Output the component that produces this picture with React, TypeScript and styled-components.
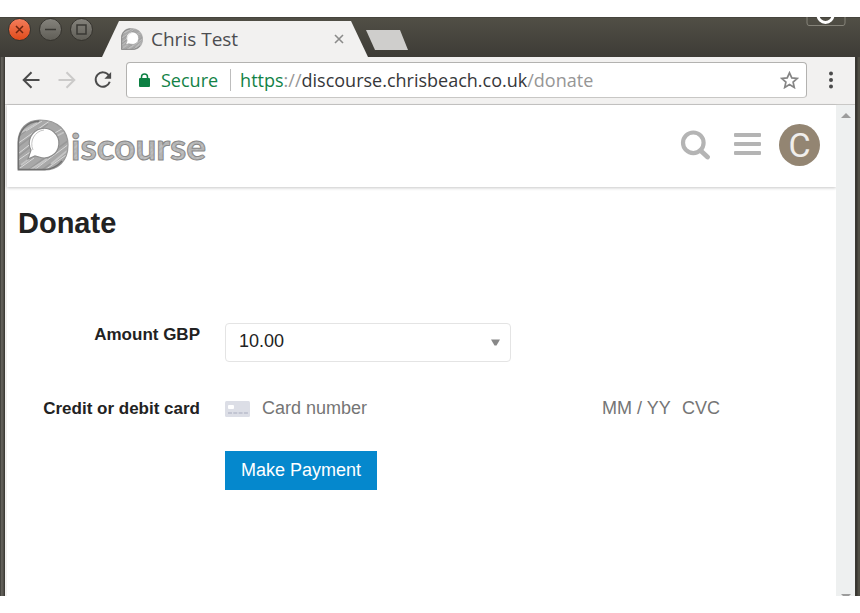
import React from "react";
import styled, { createGlobalStyle } from "styled-components";

const GlobalStyle = createGlobalStyle`
  * { box-sizing: border-box; }
  html { background: #fff; }
  body { margin: 0; }
  button, input, select { font: inherit; color: inherit; margin: 0; }
  button { cursor: pointer; }
`;

const uiFont = `"Open Sans", "Noto Sans", sans-serif`;
const pageFont = `"Liberation Sans", Arial, sans-serif`;

const Desktop = styled.div`
  display: flex;
  min-height: 100vh;
  padding: 17px 0;
`;

const BrowserWindow = styled.div`
  display: flex;
  flex-direction: column;
  flex: 1;
  min-width: 0;
  overflow: hidden;
  background: linear-gradient(90deg, #45443f 0, #45443f 1px, #64625c 1px, #5b5953 3px, #45433e 4px, #36342f 5px, #3b3933 calc(100% - 5px), #36342f calc(100% - 3px), #504e45 calc(100% - 2px));
`;

const TitleBar = styled.div`
  position: relative;
  display: flex;
  align-items: flex-end;
  height: 40px;
  padding-left: 8px;
  background: linear-gradient(#514f46, #3d3b36);
  box-shadow: inset 0 1px #46443d;
`;

const WindowControls = styled.div`
  display: flex;
  align-self: flex-start;
  gap: 8px;
  width: 94px;
  padding-top: 1px;
`;

const WindowButton = styled.button<{ $close?: boolean }>`
  display: grid;
  place-items: center;
  width: 23px;
  height: 23px;
  padding: 0;
  border: 1px solid #35332e;
  border-radius: 50%;
  color: ${(p) => (p.$close ? "#6b2410" : "#3a3934")};
  background: ${(p) => (p.$close ? "linear-gradient(#f47d5b, #df4b1b)" : "linear-gradient(#85837c, #605e57)")};
`;

const Tab = styled.div`
  display: flex;
  align-items: center;
  width: 266px;
  height: 36px;
  padding: 0 19px;
  gap: 8px;
  font: 19px/36px ${uiFont};
  color: #4c4d50;
  background: #f2f1f0;
  clip-path: polygon(0 100%, 17px 0, calc(100% - 17px) 0, 100% 100%);
`;

const TabTitle = styled.span`
  flex: 1;
`;

const PlainButton = styled.button`
  display: grid;
  place-items: center;
  padding: 0;
  border: 0;
  background: none;
`;

const TabClose = styled(PlainButton)`
  width: 20px;
  height: 20px;
  color: #8b8b8a;
`;

const NewTab = styled(PlainButton)`
  width: 42px;
  height: 20px;
  margin: 0 0 7px -2px;
  background: #cfcecc;
  clip-path: polygon(0 0, 34px 0, 100% 100%, 9px 100%);
`;

const Indicator = styled.svg`
  position: absolute;
  top: 0;
  right: 14px;
`;

const Toolbar = styled.div`
  display: flex;
  align-items: center;
  height: 48px;
  margin: 0 5px;
  padding: 0 0 1px 8px;
  border-bottom: 1px solid #c9c8c6;
  background: #f2f1f0;
`;

const ToolButton = styled(PlainButton)<{ $wide?: boolean }>`
  flex: none;
  width: ${(p) => (p.$wide ? "48px" : "36px")};
  height: 36px;
  color: #4b4b4b;

  &:disabled { color: #cbcac9; }
`;

const AddressBar = styled.div`
  display: flex;
  flex: 1;
  align-items: center;
  min-width: 0;
  height: 36px;
  margin-left: 5px;
  padding: 0 7px 0 12px;
  border: 1px solid #b3b2b0;
  border-bottom-color: #c8c7c5;
  border-radius: 4px;
  font: 18px/34px ${uiFont};
  color: #128246;
  background: #fff;
`;

const Secure = styled.span`
  margin-left: 11px;
  padding-right: 12px;
`;

const Divider = styled.span`
  width: 1px;
  height: 22px;
  margin-right: 9px;
  background: #bdbdbd;
`;

const Url = styled.div`
  flex: 1;
  min-width: 0;
  overflow: hidden;
  white-space: nowrap;
  outline: 0;
`;

const UrlPart = styled.span<{ $muted?: boolean }>`
  color: ${(p) => (p.$muted ? "#969696" : "#36373a")};
`;

const Viewport = styled.div`
  display: flex;
  flex: 1;
  margin: 0 5px;
  border-left: 2px solid #f2f1f0;
  background: #fff;
`;

const Page = styled.div`
  flex: 1;
  min-width: 0;
  font: 18px/24px ${pageFont};
  color: #222;
`;

const ScrollTrack = styled.div`
  display: flex;
  flex-direction: column;
  justify-content: space-between;
  align-items: center;
  width: 19px;
  padding-top: 8px;
  background: #eef0f0;
`;

const SiteHeader = styled.header`
  display: flex;
  align-items: center;
  height: 82px;
  padding: 0 16px 2px 10px;
  box-shadow: 0 1px 3px rgba(0, 0, 0, 0.22);
`;

const LogoLink = styled.a`
  display: block;
  height: 52px;
  margin-right: auto;
`;

const HeaderButton = styled(PlainButton)`
  width: 30px;
  height: 42px;
  margin-right: 22px;
  color: #b4b4b4;
`;

const MenuButton = styled(HeaderButton)`
  margin-right: 17px;
`;

const Avatar = styled(PlainButton)`
  width: 41px;
  height: 42px;
  border-radius: 50%;
  font: 34px/42px Roboto, sans-serif;
  color: #f0eeeb;
  background: #938572;
`;

const Main = styled.main`
  padding: 18px 11px;
`;

const Title = styled.h1`
  margin: 0;
  font-size: 29px;
  line-height: 36px;
`;

const Form = styled.form`
  padding-top: 82px;
`;

const Field = styled.div`
  display: grid;
  grid-template-columns: 182px minmax(0, 1fr);
  column-gap: 25px;
  min-height: 39px;
`;

const Label = styled.label`
  font-size: 17px;
  font-weight: 700;
  text-align: right;
`;

const SelectBox = styled.div`
  position: relative;
  max-width: 286px;
`;

const Select = styled.select`
  display: block;
  width: 100%;
  height: 39px;
  padding: 0 30px 3px 13px;
  border: 1px solid #e4e4e4;
  border-radius: 4px;
  appearance: none;
  background: #fff;
`;

const SelectArrow = styled.svg`
  position: absolute;
  top: 16px;
  right: 11px;
  pointer-events: none;
`;

const CardField = styled(Field)`
  margin-top: 35px;
`;

const CardInputs = styled.div`
  display: flex;
  align-items: center;
  height: 24px;
  max-width: 510px;
`;

const CardInput = styled.input<{ $width?: number }>`
  flex: ${(p) => (p.$width ? "none" : "1")};
  width: ${(p) => (p.$width ? `${p.$width}px` : "auto")};
  min-width: 0;
  height: 24px;
  padding: 0 0 2px;
  border: 0;
  outline: 0;
  background: transparent;

  &::placeholder { color: #757575; opacity: 1; }
`;

const CardIcon = styled.svg`
  flex: none;
  margin-right: 12px;
`;

const Actions = styled(Field)`
  margin-top: 15px;
`;

const PayButton = styled.button`
  grid-column: 2;
  justify-self: start;
  height: 39px;
  padding: 0 16px 1px;
  border: 0;
  color: #fff;
  background: #0588cd;
`;

function LogoMark({ size, id }: { size: number; id: string }) {
  const outer = "M1 51V24C1 10 10 1 23 1C41 1 51 12 51 26C51 42 41 51 27 51Z";
  const inner = "M11 40L14 31A14.800 14.800 0 1 1 22 38L18 37Z";
  return (
    <svg width={size} height={size} viewBox="0 0 52 52" aria-hidden="true">
      <clipPath id={id}><path d={outer} /></clipPath>
      <path d={outer} fill="#a8a8a8" />
      <g clipPath={`url(#${id})`} fill="none">
        <path d="M-2 20L24 0M-2 30L31 5M-2 40L17 25M0 49L50 10M10 52L52 21M22 53L53 31M33 53L53 39" stroke="#989898" strokeWidth="1.500" />
        <path d="M0 25L34 1M2 34L16 23M0 42L19 29M3 49L17 39M17 51L52 25M28 51L52 34M36 15L50 7M9 12L25 2" stroke="#dedede" strokeWidth=".9" />
        <path d="M0 16L20 4M4 46L12 40M13 51L30 40M34 45L50 32M40 17L49 12" stroke="#c4c4c4" strokeWidth="2" />
      </g>
      <path d={outer} fill="none" stroke="#999" strokeWidth="1.200" />
      <path d="M1.500 50V23C2 12 9 3 22 2M1 50.500H28C34 50.500 41 47 45 42" fill="none" stroke="#707070" strokeWidth="1.300" />
      <path d={inner} fill="#fff" stroke="#8c8c8c" strokeWidth="1.200" />
      <path d="M16 31C12 22 18 12 27 11" fill="none" stroke="#c4c4c4" />
    </svg>
  );
}

function Logo() {
  return (
    <svg width="192" height="52" viewBox="0 0 192 52" role="img" aria-label="Discourse">
      <defs>
        <pattern id="shade" width="9" height="7" patternUnits="userSpaceOnUse" patternTransform="rotate(-38)">
          <rect width="9" height="7" fill="#b4b4b4" />
          <path d="M0 2H7M3 5H9" stroke="#cacaca" />
        </pattern>
      </defs>
      <LogoMark size={52} id="logo-mark" />
      <text x="54" y="41" fontFamily="Lato, sans-serif" fontWeight="700" fontSize="37" fill="url(#shade)" stroke="#888" strokeWidth="1">
        iscourse
      </text>
    </svg>
  );
}

export default function App() {
  return (
    <>
      <GlobalStyle />
      <Desktop>
        <BrowserWindow>
          <TitleBar>
            <WindowControls>
              <WindowButton $close aria-label="Close window">
                <svg width="9" height="9" viewBox="0 0 9 9" stroke="currentColor" strokeWidth="1.500"><path d="M1 1L8 8M8 1L1 8" /></svg>
              </WindowButton>
              <WindowButton aria-label="Minimize">
                <svg width="11" height="9" viewBox="0 0 11 9" stroke="currentColor" strokeWidth="1.500"><path d="M0 4.500H11" /></svg>
              </WindowButton>
              <WindowButton aria-label="Maximize">
                <svg width="11" height="11" viewBox="0 0 11 11" fill="none" stroke="currentColor" strokeWidth="1.500"><path d="M1 1H10V10H1Z" /></svg>
              </WindowButton>
            </WindowControls>
            <Tab>
              <LogoMark size={22} id="tab-mark" />
              <TabTitle>Chris Test</TabTitle>
              <TabClose aria-label="Close tab">
                <svg width="10" height="10" viewBox="0 0 10 10" stroke="currentColor" strokeWidth="1.600"><path d="M1 1L9 9M9 1L1 9" /></svg>
              </TabClose>
            </Tab>
            <NewTab aria-label="New tab" />
            <Indicator width="40" height="10" viewBox="0 0 40 10" fill="none" aria-hidden="true">
              <path d="M1 0V6Q1 8.500 3 8.500H37Q39 8.500 39 6V0" stroke="#858379" />
              <path d="M12 -2A7.500 7.500 0 0 0 27 -2" stroke="#fff" strokeWidth="3" />
            </Indicator>
          </TitleBar>

          <Toolbar>
            <ToolButton aria-label="Back">
              <svg width="18" height="18" viewBox="0 0 18 18" fill="none" stroke="currentColor" strokeWidth="2"><path d="M17.500 9H2M9.500 1.200L1.700 9L9.500 16.800" /></svg>
            </ToolButton>
            <ToolButton aria-label="Forward" disabled>
              <svg width="18" height="18" viewBox="0 0 18 18" fill="none" stroke="currentColor" strokeWidth="2"><path d="M.5 9H16M8.500 1.200L16.300 9L8.500 16.800" /></svg>
            </ToolButton>
            <ToolButton aria-label="Reload">
              <svg width="18" height="18" viewBox="0 0 20 20" fill="none" stroke="currentColor" strokeWidth="2.200"><path d="M16.500 5A8 8 0 1 0 17.500 12" /><path d="M19 1V8.500H11.500Z" fill="currentColor" stroke="none" /></svg>
            </ToolButton>
            <AddressBar>
              <svg width="11" height="15" viewBox="0 0 11 15" aria-hidden="true"><rect y="5" width="11" height="9" rx="1" fill="#0d8043" /><path d="M2.500 6V4A3 3 0 0 1 8.500 4V6" fill="none" stroke="#0d8043" strokeWidth="1.500" /></svg>
              <Secure>Secure</Secure>
              <Divider />
              <Url role="textbox" aria-label="Address" contentEditable suppressContentEditableWarning spellCheck={false}>
                https<UrlPart $muted>://</UrlPart><UrlPart>discourse.chrisbeach.co.uk</UrlPart><UrlPart $muted>/donate</UrlPart>
              </Url>
              <PlainButton aria-label="Bookmark this page">
                <svg width="19" height="18" viewBox="0 0 19 18" fill="none" stroke="#858585" strokeWidth="1.700"><path d="M9.500 1.800L11.800 6.900L17.300 7.400L13.100 11.100L14.300 16.500L9.500 13.600L4.700 16.500L5.900 11.100L1.700 7.400L7.200 6.900Z" /></svg>
              </PlainButton>
            </AddressBar>
            <ToolButton $wide aria-label="Browser menu">
              <svg width="4" height="18" viewBox="0 0 4 18" fill="currentColor"><circle cx="2" cy="2.500" r="2" /><circle cx="2" cy="9" r="2" /><circle cx="2" cy="15.500" r="2" /></svg>
            </ToolButton>
          </Toolbar>

          <Viewport>
            <Page>
              <SiteHeader>
                <LogoLink href="#"><Logo /></LogoLink>
                <HeaderButton aria-label="Search">
                  <svg width="30" height="30" viewBox="0 0 30 30" fill="none" stroke="currentColor"><circle cx="13.300" cy="12.800" r="10.300" strokeWidth="4.200" /><path d="M20.500 20.500L27.500 27" strokeWidth="4.800" strokeLinecap="round" /></svg>
                </HeaderButton>
                <MenuButton aria-label="Menu">
                  <svg width="28" height="24" viewBox="0 0 28 24" fill="currentColor"><rect x="1" y="0" width="27" height="4" rx="1" /><rect x="1" y="9" width="27" height="4" rx="1" /><rect x="1" y="18" width="27" height="4" rx="1" /></svg>
                </MenuButton>
                <Avatar aria-label="Account">C</Avatar>
              </SiteHeader>
              <Main>
                <Title>Donate</Title>
                <Form onSubmit={(e) => e.preventDefault()}>
                  <Field>
                    <Label htmlFor="amount">Amount GBP</Label>
                    <SelectBox>
                      <Select id="amount" defaultValue="10.00"><option>10.00</option></Select>
                      <SelectArrow width="9" height="8" viewBox="0 0 9 8" aria-hidden="true"><path d="M0 .5H9L5.500 6.500H3.500Z" fill="#888" /></SelectArrow>
                    </SelectBox>
                  </Field>
                  <CardField>
                    <Label htmlFor="card">Credit or debit card</Label>
                    <CardInputs>
                      <CardIcon width="25" height="16" viewBox="0 0 25 16" aria-hidden="true">
                        <rect width="25" height="16" rx="1.500" fill="#dcdee6" />
                        <rect x="3" y="4" width="6" height="4" rx="1" fill="#fff" />
                        <path d="M3 12H23" stroke="#b9bdcc" strokeWidth="1.500" strokeDasharray="4 1.300" />
                      </CardIcon>
                      <CardInput id="card" placeholder="Card number" />
                      <CardInput $width={80} placeholder="MM / YY" aria-label="Expiry date" />
                      <CardInput $width={53} placeholder="CVC" aria-label="CVC" />
                    </CardInputs>
                  </CardField>
                  <Actions>
                    <PayButton type="submit">Make Payment</PayButton>
                  </Actions>
                </Form>
              </Main>
            </Page>
            <ScrollTrack aria-hidden="true">
              <svg width="10" height="5" viewBox="0 0 10 5"><path d="M5 0L10 5H0Z" fill="#9c9c9c" /></svg>
              <svg width="10" height="2" viewBox="0 0 10 2"><path d="M0 0H10L8 2H2Z" fill="#9c9c9c" /></svg>
            </ScrollTrack>
          </Viewport>
        </BrowserWindow>
      </Desktop>
    </>
  );
}
